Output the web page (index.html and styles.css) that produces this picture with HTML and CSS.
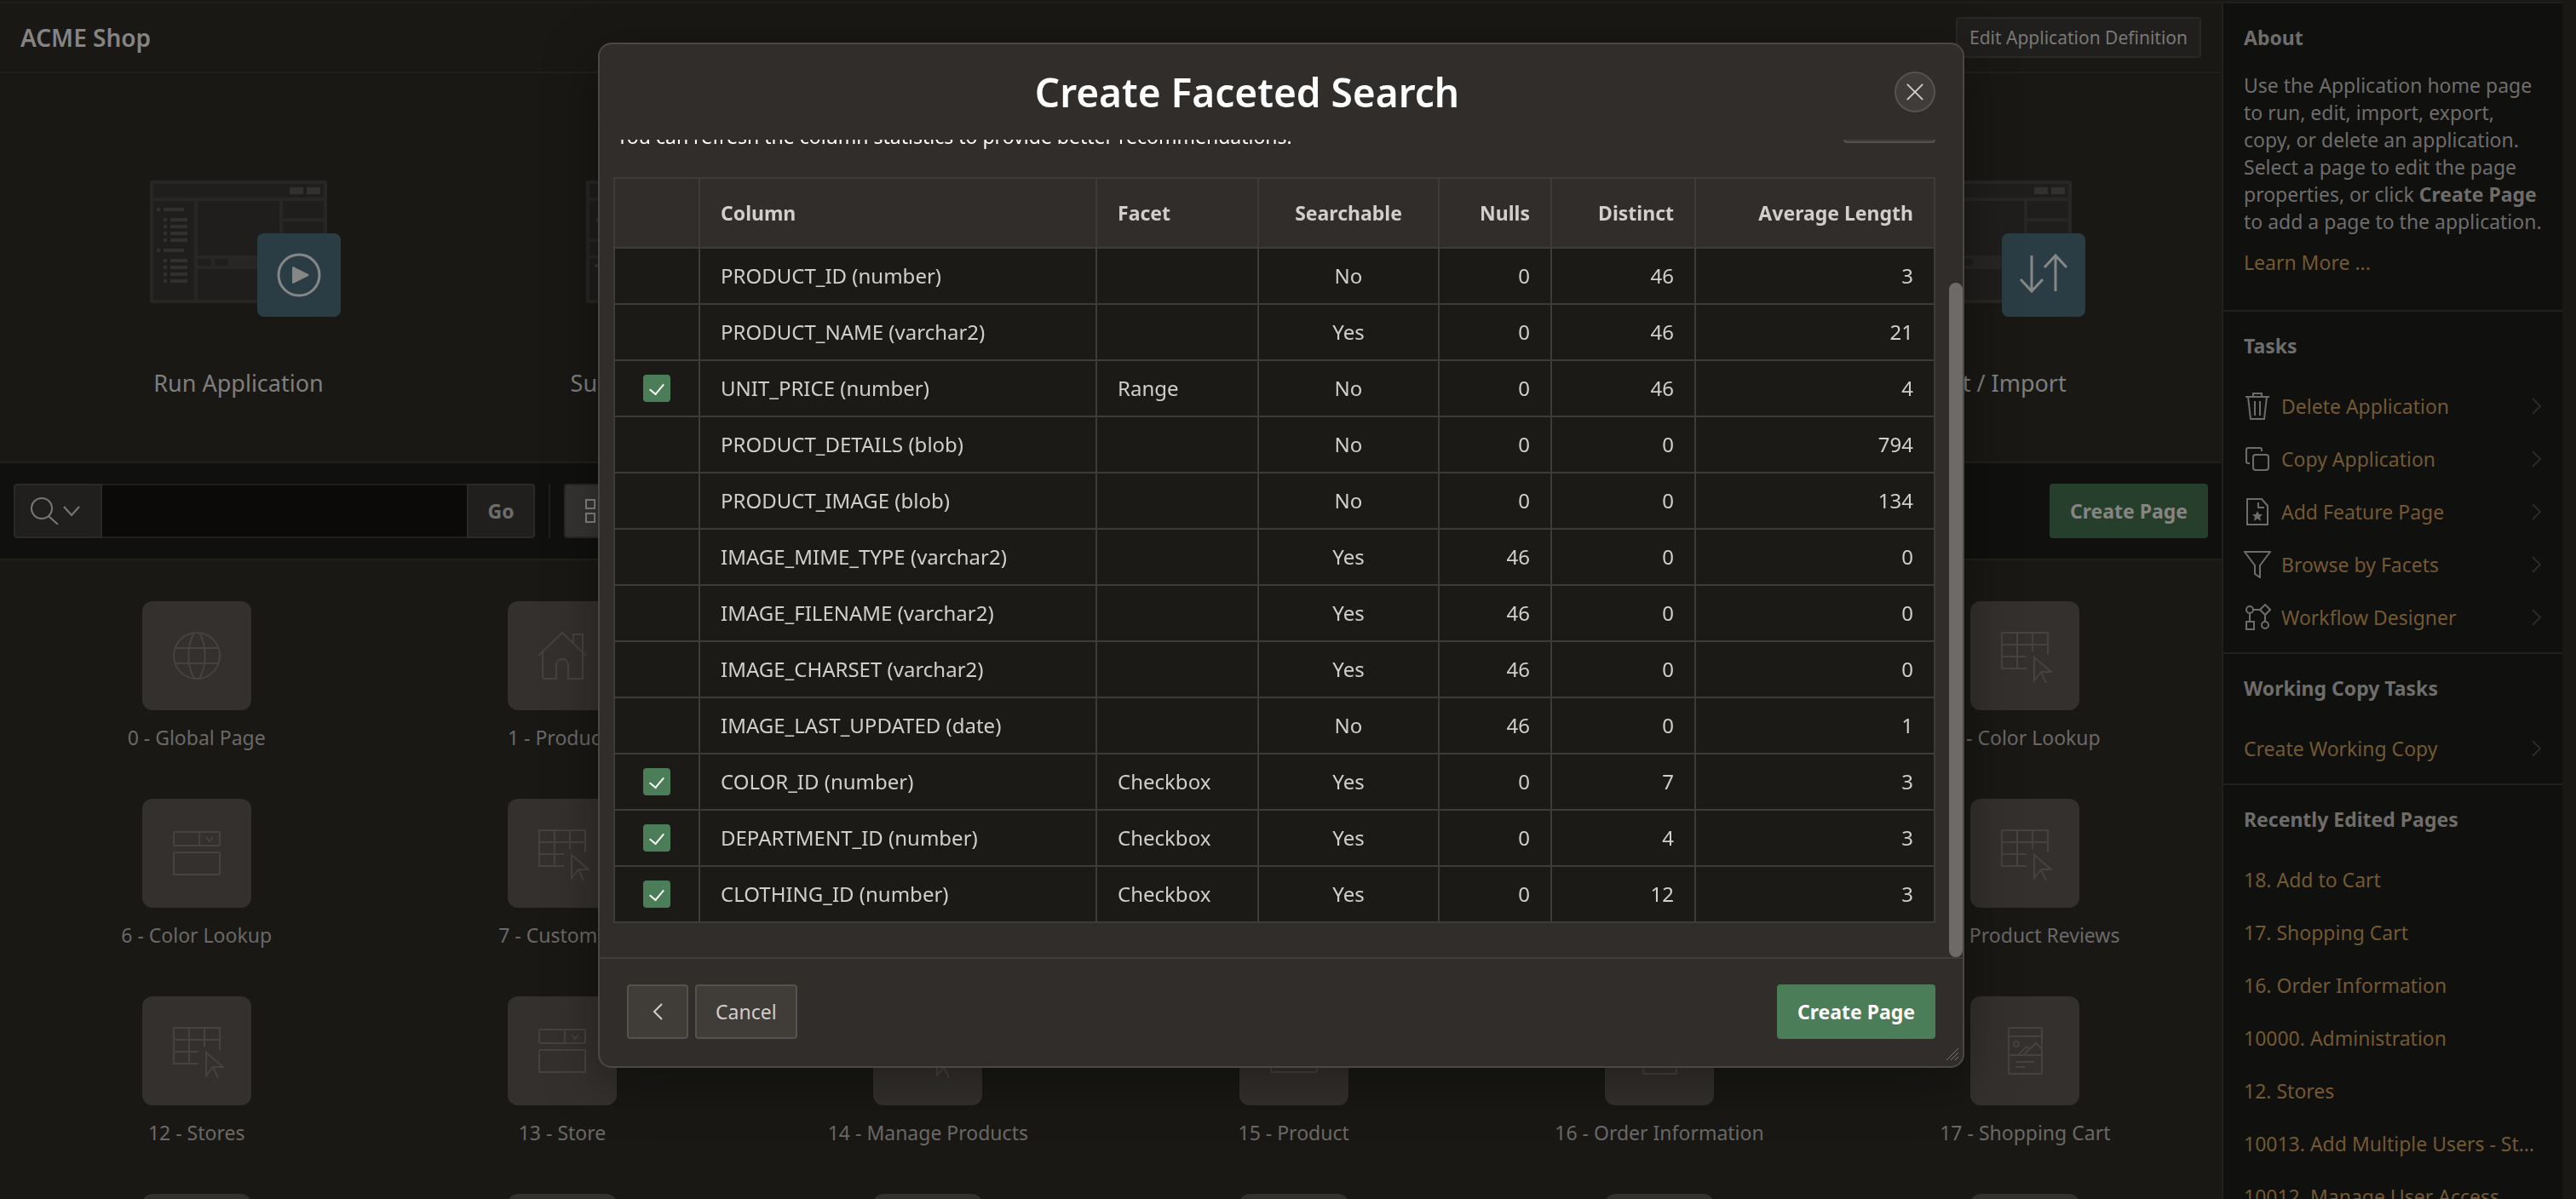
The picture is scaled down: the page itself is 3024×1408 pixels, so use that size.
FILE: index.html
```html
<!DOCTYPE html>
<html lang="en">
<head>
<meta charset="utf-8">
<title>ACME Shop - Create Faceted Search</title>
<link rel="stylesheet" href="styles.css">
</head>
<body>
<svg class="sprite" aria-hidden="true">
  <symbol id="i-globe" viewBox="0 0 64 64"><circle cx="32" cy="32" r="27"/><path d="M29 5c-9 16-9 38 0 54M35 5c9 16 9 38 0 54M7 23h50M7 41h50"/></symbol>
  <symbol id="i-home" viewBox="0 0 64 64"><path d="M4 32L32 5l28 27M9 28v29q0 2 2 2h14V43a7 7 0 0 1 14 0v16h17V28M45 17V7h11v20"/></symbol>
  <symbol id="i-form" viewBox="0 0 64 64"><rect x="5" y="7" width="54" height="16" rx="1"/><path d="M35 7v16M43 13l4 5 4-5"/><rect x="5" y="31" width="54" height="26" rx="1"/></symbol>
  <symbol id="i-grid" viewBox="0 0 64 64"><path d="M34 47H5V5h54v26M5 19h54M5 33h29M23 5v42M41 5v22M43 34v27l8-10h12zM51 51l6 13"/></symbol>
  <symbol id="i-card" viewBox="0 0 64 64"><rect x="13" y="5" width="39" height="54" rx="1"/><path d="M13 15h39M13 37h39M24 37l10-10 3 3M30 37l15-14 7 7M21 45h22M21 51h11"/><circle cx="22" cy="24" r="3"/></symbol>
  <symbol id="i-mock" viewBox="0 0 208 144">
    <rect class="m-line" width="208" height="144" rx="2"/>
    <path class="m-panel" d="M4 4h200v16H4zM4 24h48v116H4zM56 24h96v64H56zM156 24h48v20h-48zM156 48h48v92h-48zM56 104h96v36H56zM56 92h16v8H56zM76 92h16v8H76z"/>
    <path class="m-btn" d="M164 8h16v8h-16zM184 8h16v8h-16z"/>
    <path class="m-tree" d="M8 32h4v4H8zM16 32h24v4H16zM16 44h4v4h-4zM24 44h20v4H24zM16 52h4v4h-4zM24 52h20v4H24zM16 60h4v4h-4zM24 60h20v4H24zM16 68h4v4h-4zM24 68h20v4H24zM8 80h4v4H8zM16 80h24v4H16zM16 92h4v4h-4zM24 92h20v4H24zM16 100h4v4h-4zM24 100h20v4H24zM16 108h4v4h-4zM24 108h20v4H24zM16 116h4v4h-4zM24 116h20v4H24z"/>
  </symbol>
  <symbol id="i-mock2" viewBox="0 0 208 144">
    <rect class="m-line" width="208" height="144" rx="2"/>
    <path class="m-panel" d="M4 4h200v16H4zM4 24h200v44H4zM4 72h200v16H4zM4 92h200v48H4z"/>
    <path class="m-tree" d="M12 44h40v4H12zM10 98h40v4H10z"/>
  </symbol>
  <symbol id="i-next" viewBox="0 0 12 20"><path d="M1 1l9 9-9 9"/></symbol>
</svg>

<div class="page">
  <div class="topline"></div>
  <div class="columns">
    <main class="main">
      <header class="apphead">
        <h1>ACME Shop</h1>
        <button class="btn btn-edit" type="button">Edit Application Definition</button>
      </header>
      <nav class="cards">
        <a href="#"><svg class="mock"><use href="#i-mock"/><rect class="badge" x="126" y="62" width="98" height="98" rx="8"/><circle class="glyph" cx="175" cy="111" r="24"/><path class="solid" d="M167 102v18q0 1 1 1l18-9q1-1 0-2l-18-9q-1 0-1 1z"/></svg><span>Run Application</span></a>
        <a href="#"><svg class="mock"><use href="#i-mock2"/></svg><span>Supporting Objects</span></a>
        <a href="#"><svg class="mock"><use href="#i-mock"/></svg><span>Shared Components</span></a>
        <a href="#"><svg class="mock"><use href="#i-mock"/></svg><span>Utilities</span></a>
        <a href="#"><svg class="mock"><use href="#i-mock"/><rect class="badge" x="126" y="62" width="98" height="98" rx="8"/><path class="glyph" d="M161 88v41M148 116l13 14 13-14M189 130V89M176 102l13-14 13 14"/></svg><span>Export / Import</span></a>
      </nav>
      <div class="toolbar">
        <form class="search">
          <button class="seg seg-find" type="button" aria-label="Search options">
            <svg class="i-find" viewBox="0 0 64 32"><circle cx="17" cy="13" r="12"/><path d="M25 22l11 10M43 11l9 10 9-10"/></svg>
          </button>
          <input type="text" aria-label="Search pages">
          <button class="seg seg-go" type="button">Go</button>
        </form>
        <span class="rule"></span>
        <button class="btn view" type="button" aria-label="View icons"><svg viewBox="0 0 28 28"><path d="M1 1h10v10H1zM17 1h10v10H17zM1 17h10v10H1zM17 17h10v10H17z"/></svg></button>
        <button class="btn btn-create push" type="button">Create Page</button>
      </div>
      <nav class="tiles">
        <a href="#"><svg><use href="#i-globe"/></svg><span>0 - Global Page</span></a>
        <a href="#"><svg><use href="#i-home"/></svg><span>1 - Products</span></a>
        <a href="#"><svg><use href="#i-form"/></svg><span>2 - Customers</span></a>
        <a href="#"><svg><use href="#i-grid"/></svg><span>3 - Orders</span></a>
        <a href="#"><svg><use href="#i-form"/></svg><span>4 - Order</span></a>
        <a href="#"><svg><use href="#i-grid"/></svg><span>5 - Color Lookup</span></a>
        <a href="#"><svg><use href="#i-form"/></svg><span>6 - Color Lookup</span></a>
        <a href="#"><svg><use href="#i-grid"/></svg><span>7 - Customers</span></a>
        <a href="#"><svg><use href="#i-form"/></svg><span>8 - Customer</span></a>
        <a href="#"><svg><use href="#i-grid"/></svg><span>9 - Departments</span></a>
        <a href="#"><svg><use href="#i-form"/></svg><span>10 - Department</span></a>
        <a href="#"><svg><use href="#i-grid"/></svg><span>11 - Product Reviews</span></a>
        <a href="#"><svg><use href="#i-grid"/></svg><span>12 - Stores</span></a>
        <a href="#"><svg><use href="#i-form"/></svg><span>13 - Store</span></a>
        <a href="#"><svg><use href="#i-grid"/></svg><span>14 - Manage Products</span></a>
        <a href="#"><svg><use href="#i-form"/></svg><span>15 - Product</span></a>
        <a href="#"><svg><use href="#i-card"/></svg><span>16 - Order Information</span></a>
        <a href="#"><svg><use href="#i-card"/></svg><span>17 - Shopping Cart</span></a>
        <a href="#" aria-label="Page 18"><svg><use href="#i-form"/></svg></a>
        <a href="#" aria-label="Page 19"><svg><use href="#i-form"/></svg></a>
        <a href="#" aria-label="Page 20"><svg><use href="#i-form"/></svg></a>
        <a href="#" aria-label="Page 21"><svg><use href="#i-form"/></svg></a>
        <a href="#" aria-label="Page 22"><svg><use href="#i-form"/></svg></a>
        <a href="#" aria-label="Page 23"><svg><use href="#i-form"/></svg></a>
      </nav>
    </main>

    <aside class="side">
      <section class="about">
        <h2>About</h2>
        <p>Use the Application home page<br>to run, edit, import, export,<br>copy, or delete an application.<br>Select a page to edit the page<br>properties, or click <b>Create Page</b><br>to add a page to the application.</p>
        <p><a href="#">Learn More ...</a></p>
      </section>
      <section>
        <h2>Tasks</h2>
        <ul>
          <li><a href="#"><svg class="ico" viewBox="0 0 32 32"><path d="M2 5h28M11 5V1h10v4M5 5l3 26h16l3-26M13 10v17M19 10v17"/></svg><span>Delete Application</span><svg class="next"><use href="#i-next"/></svg></a></li>
          <li><a href="#"><svg class="ico" viewBox="0 0 32 32"><path d="M7 21H5q-2 0-2-2V5q0-2 2-2h14q2 0 2 2v2"/><rect x="11" y="11" width="18" height="18" rx="3"/></svg><span>Copy Application</span><svg class="next"><use href="#i-next"/></svg></a></li>
          <li><a href="#"><svg class="ico" viewBox="0 0 32 32"><path d="M4 1h17l7 8v22H4zM17 5v6h7"/><path class="star" d="M16 15l2 4h4l-3 3 1 5-4-3-4 3 1-5-3-3h4z"/></svg><span>Add Feature Page</span><svg class="next"><use href="#i-next"/></svg></a></li>
          <li><a href="#"><svg class="ico" viewBox="0 0 32 32"><path d="M1 1h30L19 17v14l-6-4V17z"/></svg><span>Browse by Facets</span><svg class="next"><use href="#i-next"/></svg></a></li>
          <li><a href="#"><svg class="ico" viewBox="0 0 32 32"><circle cx="7" cy="7" r="4"/><path d="M25 1l6 6-6 6-6-6zM11 7h8M7 11v10M25 13v8"/><rect x="3" y="21" width="9" height="9"/><circle cx="25" cy="25" r="4"/></svg><span>Workflow Designer</span><svg class="next"><use href="#i-next"/></svg></a></li>
        </ul>
      </section>
      <section>
        <h2>Working Copy Tasks</h2>
        <ul><li><a href="#"><span>Create Working Copy</span><svg class="next"><use href="#i-next"/></svg></a></li></ul>
      </section>
      <section>
        <h2>Recently Edited Pages</h2>
        <ul>
          <li><a href="#">18. Add to Cart</a></li>
          <li><a href="#">17. Shopping Cart</a></li>
          <li><a href="#">16. Order Information</a></li>
          <li><a href="#">10000. Administration</a></li>
          <li><a href="#">12. Stores</a></li>
          <li><a href="#">10013. Add Multiple Users - St…</a></li>
          <li><a href="#">10012. Manage User Access</a></li>
        </ul>
      </section>
    </aside>
  </div>
</div>

<div class="overlay">
  <div class="dialog" role="dialog" aria-labelledby="dlg-title">
    <header class="dlg-head">
      <h2 id="dlg-title">Create Faceted Search</h2>
      <button class="close" type="button" aria-label="Close"><svg viewBox="0 0 24 24"><path d="M2 2l20 20M22 2L2 22"/></svg></button>
    </header>
    <div class="dlg-body">
      <div class="intro">
        <p>You can refresh the column statistics to provide better recommendations.</p>
        <button class="btn refresh" type="button" aria-label="Refresh"></button>
      </div>
      <table>
        <colgroup><col class="c1"><col class="c2"><col class="c3"><col class="c4"><col class="c5"><col class="c6"><col></colgroup>
        <thead><tr><th></th><th>Column</th><th>Facet</th><th class="mid">Searchable</th><th class="num">Nulls</th><th class="num">Distinct</th><th class="num">Average Length</th></tr></thead>
        <tbody>
          <tr><td></td><td>PRODUCT_ID (number)</td><td></td><td class="mid">No</td><td class="num">0</td><td class="num">46</td><td class="num">3</td></tr>
          <tr><td></td><td>PRODUCT_NAME (varchar2)</td><td></td><td class="mid">Yes</td><td class="num">0</td><td class="num">46</td><td class="num">21</td></tr>
          <tr><td class="pick"><input type="checkbox" aria-labelledby="n3" checked></td><td id="n3">UNIT_PRICE (number)</td><td>Range</td><td class="mid">No</td><td class="num">0</td><td class="num">46</td><td class="num">4</td></tr>
          <tr><td></td><td>PRODUCT_DETAILS (blob)</td><td></td><td class="mid">No</td><td class="num">0</td><td class="num">0</td><td class="num">794</td></tr>
          <tr><td></td><td>PRODUCT_IMAGE (blob)</td><td></td><td class="mid">No</td><td class="num">0</td><td class="num">0</td><td class="num">134</td></tr>
          <tr><td></td><td>IMAGE_MIME_TYPE (varchar2)</td><td></td><td class="mid">Yes</td><td class="num">46</td><td class="num">0</td><td class="num">0</td></tr>
          <tr><td></td><td>IMAGE_FILENAME (varchar2)</td><td></td><td class="mid">Yes</td><td class="num">46</td><td class="num">0</td><td class="num">0</td></tr>
          <tr><td></td><td>IMAGE_CHARSET (varchar2)</td><td></td><td class="mid">Yes</td><td class="num">46</td><td class="num">0</td><td class="num">0</td></tr>
          <tr><td></td><td>IMAGE_LAST_UPDATED (date)</td><td></td><td class="mid">No</td><td class="num">46</td><td class="num">0</td><td class="num">1</td></tr>
          <tr><td class="pick"><input type="checkbox" aria-labelledby="n10" checked></td><td id="n10">COLOR_ID (number)</td><td>Checkbox</td><td class="mid">Yes</td><td class="num">0</td><td class="num">7</td><td class="num">3</td></tr>
          <tr><td class="pick"><input type="checkbox" aria-labelledby="n11" checked></td><td id="n11">DEPARTMENT_ID (number)</td><td>Checkbox</td><td class="mid">Yes</td><td class="num">0</td><td class="num">4</td><td class="num">3</td></tr>
          <tr><td class="pick"><input type="checkbox" aria-labelledby="n12" checked></td><td id="n12">CLOTHING_ID (number)</td><td>Checkbox</td><td class="mid">Yes</td><td class="num">0</td><td class="num">12</td><td class="num">3</td></tr>
        </tbody>
      </table>
      <span class="thumb"></span>
    </div>
    <footer class="dlg-foot">
      <button class="btn dlg-btn back" type="button" aria-label="Previous"><svg viewBox="0 0 12 20"><path d="M11 1l-9 9 9 9"/></svg></button>
      <button class="btn dlg-btn" type="button">Cancel</button>
      <button class="btn btn-create bright push" type="button">Create Page</button>
    </footer>
    <svg class="grip" viewBox="0 0 16 16"><path d="M1 15L15 1M6 15l9-9M11 15l4-4"/></svg>
  </div>
</div>
</body>
</html>
```

FILE: styles.css
```css
* { box-sizing: border-box; }

html, body { height: 100%; }

body {
  margin: 0;
  overflow: hidden;
  background: #191815;
  color: #7a7876;
  font-family: "Noto Sans", "Open Sans", sans-serif;
  font-size: 23px;
  line-height: 32px;
}

h1, h2, p, ul { margin: 0; padding: 0; }
ul { list-style: none; }
a { color: inherit; text-decoration: none; }
button, input { font: inherit; color: inherit; }
svg { fill: none; stroke: currentColor; stroke-width: 2; flex: none; display: block; }
.sprite { position: absolute; width: 0; height: 0; }

.page { height: 100%; overflow: hidden; padding-right: 16px; }
.topline { height: 4px; border-bottom: 2px solid #211f1d; }
.columns { display: flex; }
.main { flex: 1; min-width: 0; }

.btn {
  height: 64px;
  padding: 0 22px;
  border: 2px solid #2a2826;
  border-radius: 4px;
  background: #201f1d;
  white-space: nowrap;
}
.push { margin-left: auto; }

/* Application header */
.apphead {
  display: flex;
  align-items: center;
  justify-content: space-between;
  height: 82px;
  padding: 0 24px;
  border-bottom: 2px solid #21201e;
}
.apphead h1 { font-size: 28px; font-weight: 600; color: #868482; }
.btn-edit { height: 48px; padding: 0 14px; font-size: 21px; }

/* Launch cards */
.cards {
  display: grid;
  grid-template-columns: repeat(5, 1fr);
  height: 456px;
  padding: 126px 24px 0;
}
.cards a {
  display: flex;
  flex-direction: column;
  align-items: center;
  gap: 78px;
  font-size: 27px;
  color: #807e7c;
}
.mock { width: 208px; height: 144px; overflow: visible; stroke: none; }
.m-line { fill: #272624; stroke: none; }
.m-panel { fill: #1f1e1c; stroke: none; }
.m-btn { fill: #33302d; stroke: none; }
.m-tree { fill: #31302e; stroke: none; }
.badge { fill: #2b3d44; }
.glyph { stroke: #868686; stroke-width: 3; }
.solid { fill: #868686; }

/* Search toolbar */
.toolbar {
  display: flex;
  align-items: center;
  gap: 16px;
  height: 116px;
  padding: 0 16px;
  border-top: 2px solid #21201e;
  border-bottom: 2px solid #21201e;
  background: #10100e;
}
.search { display: flex; width: 612px; height: 64px; }
.seg { border: 2px solid #2a2927; background: #201f1d; padding: 0; }
.seg-find { width: 104px; border-radius: 4px 0 0 4px; padding-left: 14px; }
.seg-go { width: 80px; border-radius: 0 4px 4px 0; font-weight: 700; color: #6f6d6b; }
.i-find { width: 64px; height: 32px; }
.search input {
  flex: 1;
  min-width: 0;
  border: 2px solid #211f1d;
  border-width: 2px 0;
  background: #0b0a08;
}
.rule { width: 2px; height: 64px; background: #21201e; }
.view { padding: 0 23px; background: #363432; color: #868482; }
.view svg { width: 28px; height: 28px; }
.btn-create {
  border-color: #263e2c;
  background: #263e2c;
  color: #868583;
  font-weight: 700;
}

/* Page tiles */
.tiles {
  display: grid;
  grid-template-columns: repeat(6, 1fr);
  grid-auto-rows: 232px;
  padding: 48px 16px;
  color: #6b6967;
}
.tiles a { display: flex; flex-direction: column; align-items: center; gap: 16px; }
.tiles svg {
  width: 128px;
  height: 128px;
  padding: 32px;
  border-radius: 12px;
  background: #33302d;
  color: #454341;
}

/* Side column */
.side {
  width: 400px;
  border-left: 2px solid #21201e;
  background: #10100e;
}
.side section { padding-bottom: 10px; border-bottom: 2px solid #21201e; }
.side section.about { padding-bottom: 40px; }
.side h2 {
  padding: 24px;
  font-size: 23px;
  line-height: 32px;
  font-weight: 700;
  color: #6f6d6b;
}
.side p { padding: 0 24px 16px; color: #6f6d6b; white-space: nowrap; }
.about p:last-child { padding-bottom: 0; }
.side a { color: #735933; }
.side li a {
  display: flex;
  align-items: center;
  gap: 12px;
  height: 62px;
  padding: 0 24px;
  white-space: nowrap;
}
.ico { width: 32px; height: 32px; color: #6f6d6b; }
.star { fill: currentColor; stroke: none; }
.next { width: 12px; height: 20px; margin-left: auto; color: #2d2b29; }

/* Dialog */
.overlay {
  position: fixed;
  inset: 0 16px 0 0;
  display: flex;
  justify-content: center;
  align-items: flex-start;
  padding-top: 50px;
}
.dialog {
  position: relative;
  display: flex;
  flex-direction: column;
  width: 90%;
  max-width: 1604px;
  height: calc(100vh - 204px);
  border: 2px solid #4b4743;
  border-radius: 16px;
  background: #312d2a;
  box-shadow: 0 16px 64px rgba(0, 0, 0, .35);
  color: #d1cfcd;
  overflow: hidden;
}
.dlg-head { display: flex; align-items: center; height: 112px; padding-right: 32px; flex: none; }
.dlg-head h2 {
  flex: 1;
  text-align: center;
  font-size: 46px;
  line-height: 56px;
  font-weight: 600;
  color: #fff;
}
.close {
  display: grid;
  place-items: center;
  width: 48px;
  height: 48px;
  padding: 0;
  border: 2px solid #57534f;
  border-radius: 50%;
  background: #403c39;
}
.close svg { width: 22px; height: 22px; }

/* Body is scrolled to its end, so content is anchored to the bottom edge */
.dlg-body {
  position: relative;
  flex: 1;
  min-height: 0;
  display: flex;
  flex-direction: column;
  justify-content: flex-end;
  padding: 0 32px 40px 16px;
  overflow: hidden;
}
.intro {
  display: flex;
  align-items: flex-end;
  justify-content: space-between;
  margin-bottom: 40px;
  padding-left: 4px;
}
.intro p { color: #fff; line-height: 16px; }
.refresh { width: 108px; height: 48px; padding: 0; border-color: #55514d; background: #403c39; }

table { width: 100%; table-layout: fixed; border-collapse: collapse; font-size: 24px; }
.c1 { width: 100px; }
.c2 { width: 466px; }
.c3 { width: 190px; }
.c4 { width: 212px; }
.c5 { width: 132px; }
.c6 { width: 169px; }
th, td {
  height: 66px;
  padding: 0 24px;
  border: 2px solid #3f3c37;
  text-align: left;
  white-space: nowrap;
}
td { background: #1b1a17; }
th { height: 82px; font-size: 23px; font-weight: 700; }
.mid { text-align: center; }
.num { text-align: right; }
.pick { padding: 0; }
.pick input {
  display: block;
  appearance: none;
  width: 32px;
  height: 32px;
  margin: 0 auto;
  border-radius: 4px;
  background: #4a7d58;
}
.pick input::before {
  content: "";
  display: block;
  width: 8px;
  height: 14px;
  margin: 7px auto 0;
  border: solid #fff;
  border-width: 0 2px 2px 0;
  transform: rotate(40deg);
}
.thumb {
  position: absolute;
  right: 0;
  bottom: 0;
  width: 16px;
  height: calc(100% - 168px);
  border-radius: 8px;
  background: #6e6a67;
}
.dlg-foot {
  display: flex;
  gap: 8px;
  padding: 30px 32px 32px;
  border-top: 2px solid #403c38;
  flex: none;
}
.dlg-btn { border-color: #57514c; background: #403c38; }
.back { width: 72px; padding: 0; display: grid; place-items: center; }
.back svg { width: 12px; height: 20px; }
.bright { border-color: #4a7d58; background: #4a7d58; color: #fff; }
.grip { position: absolute; right: 4px; bottom: 6px; width: 16px; height: 16px; color: #7c7874; stroke-width: 1; }
```
